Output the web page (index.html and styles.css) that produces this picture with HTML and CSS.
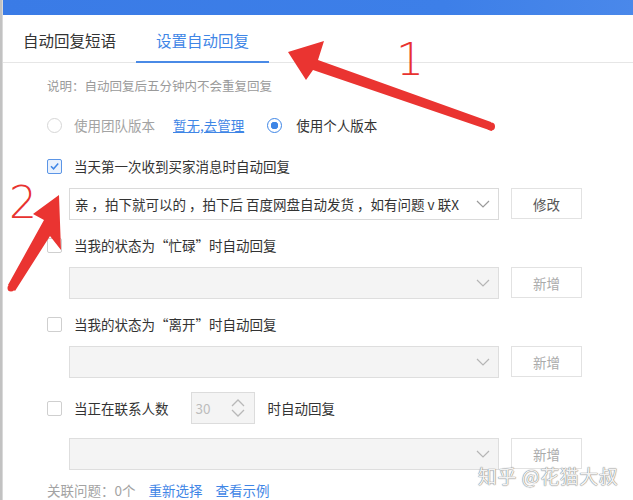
FILE: index.html
```html
<!DOCTYPE html>
<html lang="zh">
<head>
<meta charset="utf-8">
<title>设置自动回复</title>
<link rel="stylesheet" href="styles.css">
</head>
<body>
<div class="window">
  <div class="strip"></div>
  <div class="main">
    <div class="titlebar"></div>
    <div class="tabs">
      <div class="tab">自动回复短语</div>
      <div class="tab active">设置自动回复</div>
    </div>
    <div class="content">
      <p class="note">说明：自动回复后五分钟内不会重复回复</p>
      <div class="radios">
        <span class="radio disabled"></span>
        <span class="radio-label muted">使用团队版本</span>
        <a class="link underline">暂无,去管理</a>
        <span class="radio on"></span>
        <span class="radio-label">使用个人版本</span>
      </div>

      <div class="group">
        <div class="label-row">
          <span class="check on"><svg viewBox="0 0 14 14" width="14" height="14"><path d="M3.2 7.2 L6 10 L11 4.2" fill="none" stroke="#3f86e6" stroke-width="1.6"/></svg></span>
          <span class="label">当天第一次收到买家消息时自动回复</span>
        </div>
        <div class="select-row">
          <div class="select">
            <span class="select-text">亲 ，拍下就可以的 ，拍下后 百度网盘自动发货 ，如有问题 v 联X</span>
            <svg class="chev" viewBox="0 0 14 8" width="14" height="8"><path d="M1 1 L7 7 L13 1" fill="none" stroke="#9a9a9a" stroke-width="1.2"/></svg>
          </div>
          <div class="btn">修改</div>
        </div>
      </div>

      <div class="group">
        <div class="label-row">
          <span class="check"></span>
          <span class="label">当我的状态为“忙碌”时自动回复</span>
        </div>
        <div class="select-row">
          <div class="select disabled">
            <span class="select-text"></span>
            <svg class="chev" viewBox="0 0 14 8" width="14" height="8"><path d="M1 1 L7 7 L13 1" fill="none" stroke="#b5b5b5" stroke-width="1.2"/></svg>
          </div>
          <div class="btn dim">新增</div>
        </div>
      </div>

      <div class="group">
        <div class="label-row">
          <span class="check"></span>
          <span class="label">当我的状态为“离开”时自动回复</span>
        </div>
        <div class="select-row">
          <div class="select disabled">
            <span class="select-text"></span>
            <svg class="chev" viewBox="0 0 14 8" width="14" height="8"><path d="M1 1 L7 7 L13 1" fill="none" stroke="#b5b5b5" stroke-width="1.2"/></svg>
          </div>
          <div class="btn dim">新增</div>
        </div>
      </div>

      <div class="group last">
        <div class="label-row num-row">
          <span class="check"></span>
          <span class="label">当正在联系人数</span>
          <div class="num">
            <span class="num-val">30</span>
            <svg class="spin" viewBox="0 0 16 22" width="16" height="22"><path d="M2 9 L8 3 L14 9 M2 13 L8 19 L14 13" fill="none" stroke="#b8b8b8" stroke-width="1.3"/></svg>
          </div>
          <span class="label after">时自动回复</span>
        </div>
        <div class="select-row wide-gap">
          <div class="select disabled">
            <span class="select-text"></span>
            <svg class="chev" viewBox="0 0 14 8" width="14" height="8"><path d="M1 1 L7 7 L13 1" fill="none" stroke="#b5b5b5" stroke-width="1.2"/></svg>
          </div>
          <div class="btn dim">新增</div>
        </div>
      </div>

      <div class="related">
        <span class="muted">关联问题：0个</span>
        <a class="link">重新选择</a>
        <a class="link">查看示例</a>
      </div>
    </div>
  </div>

  <svg class="overlay" viewBox="0 0 633 500" width="633" height="500">
    <polygon class="red" points="288,52 324,41 318,60 491,122 492,131 313,70 306,80"/>
    <circle class="red" cx="491" cy="126.5" r="4"/>
    <text class="digit" x="396" y="75">1</text>
    <polygon class="red" points="59,195 33,214 44,220 8,285 15,291 50,236 61,250"/>
    <circle class="red" cx="11" cy="288" r="3.5"/>
    <text class="digit" x="9" y="218">2</text>
  </svg>
  <div class="watermark">知乎 @花猫大叔</div>
</div>
</body>
</html>
```

FILE: styles.css
```css
* { box-sizing: border-box; }
html, body { margin: 0; padding: 0; background: #fff; }
body {
  font-family: "Noto Sans CJK SC", "Noto Sans", sans-serif;
  font-size: 13.5px;
  color: #333;
}
.window {
  position: relative;
  width: 633px;
  height: 500px;
  overflow: hidden;
  display: flex;
  background: #fff;
}
.strip {
  width: 3px;
  flex: none;
  background: #c2c2c2;
  border-right: 1px solid #d9d9d9;
}
.main { flex: 1; display: flex; flex-direction: column; }
.titlebar {
  height: 16px;
  background: linear-gradient(90deg, #3a7be6 0%, #3d7fe8 70%, #4a88ea 100%);
}
.tabs {
  height: 49px;
  display: flex;
  align-items: stretch;
  border-bottom: 1px solid #e6e6e6;
  padding-top: 3px;
}
.tab {
  display: flex;
  align-items: center;
  padding: 0 20px;
  font-size: 15.5px;
  color: #333;
  margin-bottom: -1px;
  border-bottom: 2px solid transparent;
}
.tab.active { color: #3f86e6; border-bottom-color: #4a8ae6; }

.content { padding-left: 44px; }
.note {
  margin: 13px 0 0;
  line-height: 20px;
  font-size: 12.5px;
  color: #9a9a9a;
}
.radios {
  margin-top: 19px;
  height: 20px;
  display: flex;
  align-items: center;
}
.radio {
  width: 15px; height: 15px;
  border-radius: 50%;
  border: 1px solid #d6d6d6;
  background: #fff;
  flex: none;
}
.radio.on {
  border-color: #3f86e6;
  background: radial-gradient(circle, #3f86e6 0 3.5px, #fff 4px);
  margin-left: 23px;
}
.radio-label { margin-left: 12px; }
.radio.on + .radio-label { margin-left: 14px; }
.muted { color: #a3a3a3; }
.link { color: #3f86e6; text-decoration: none; }
.link.underline { text-decoration: underline; margin-left: 18px; }

.group { margin-top: 15px; }
.group + .group { margin-top: 9px; }
.label-row {
  height: 32px;
  display: flex;
  align-items: center;
}
.check {
  width: 15px; height: 15px;
  border: 1px solid #cfcfcf;
  border-radius: 2px;
  background: #fff;
  flex: none;
  display: flex;
  align-items: center;
  justify-content: center;
}
.check.on { border-color: #5b95e6; background: #eaf2fd; }
.check svg { display: block; }
.label { margin-left: 12px; }
.label.after { margin-left: 13px; }
.select-row {
  margin-top: 6px;
  margin-left: 22px;
  display: flex;
  gap: 12px;
}
.select {
  width: 430px;
  height: 32px;
  border: 1px solid #dadada;
  background: #fff;
  display: flex;
  align-items: center;
  padding: 0 8px 0 5px;
}
.select.disabled { background: #f4f4f4; border-color: #dedede; }
.select-text {
  flex: 1;
  white-space: nowrap;
  overflow: hidden;
  color: #333;
}
.chev { flex: none; margin-left: 6px; }
.btn {
  width: 71px;
  height: 31px;
  border: 1px solid #e2e2e2;
  background: #fff;
  display: flex;
  align-items: center;
  justify-content: center;
  color: #555;
}
.btn.dim { color: #aaa; }

.group.last { margin-top: 14px; }
.num-row { height: 32px; }
.num {
  margin-left: 22px;
  width: 64px;
  height: 32px;
  border: 1px solid #dcdcdc;
  background: #f4f4f4;
  display: flex;
  align-items: center;
  justify-content: space-between;
  padding: 0 8px 0 4px;
}
.num-val { color: #bcbcbc; }
.spin { display: block; }
.select-row.wide-gap { margin-top: 14px; }

.related {
  margin-top: 10px;
  line-height: 20px;
  display: flex;
  gap: 13px;
}

.overlay {
  position: absolute;
  left: 0; top: 0;
  pointer-events: none;
}
.red { fill: #ea3431; }
.digit {
  fill: #e8322f;
  font-family: "DejaVu Sans", sans-serif;
  font-size: 44px;
  font-weight: 300;
}
.watermark {
  position: absolute;
  left: 478px;
  top: 462px;
  font-size: 19px;
  color: #f2f2f2;
  text-shadow: 0 0 1px #7a7a7a, 0 0 1px #7a7a7a;
  letter-spacing: 0.5px;
  white-space: nowrap;
}
```
